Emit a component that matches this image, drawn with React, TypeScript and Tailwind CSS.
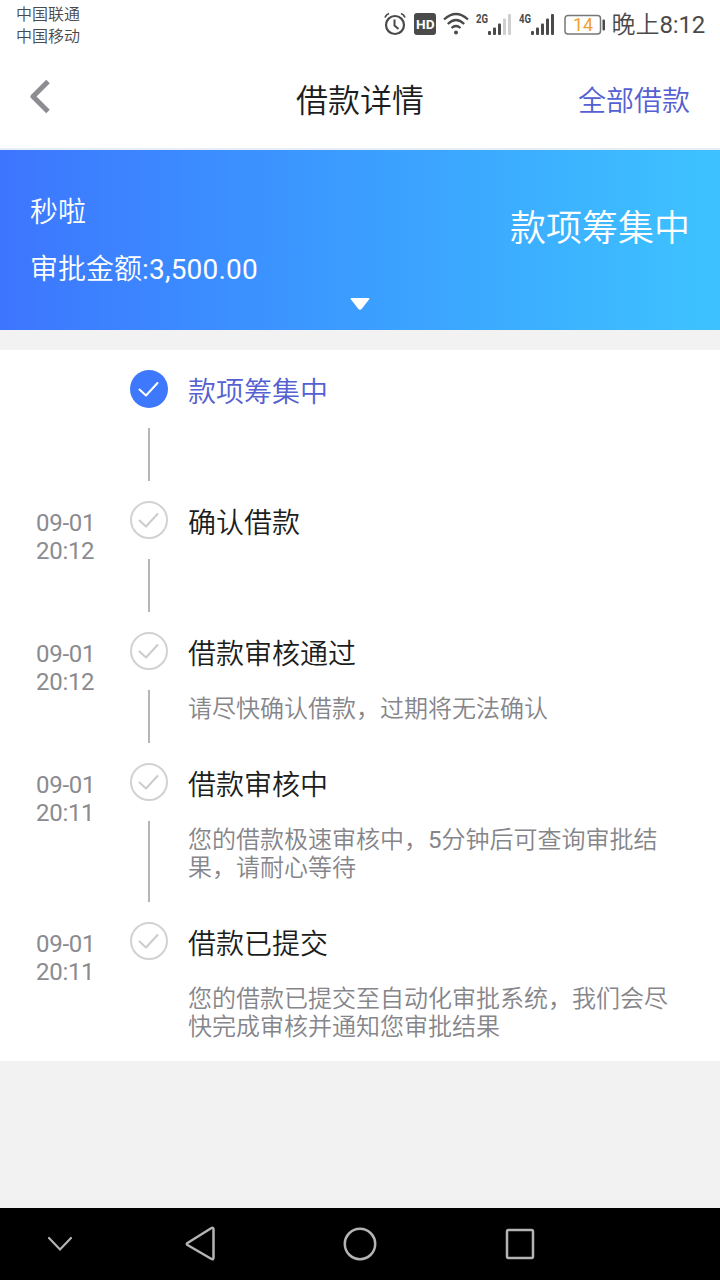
type Step = { title: string; date?: string; time?: string; note?: string[]; active?: boolean };

const steps: Step[] = [
  { title: "款项筹集中", active: true },
  { title: "确认借款", date: "09-01", time: "20:12" },
  { title: "借款审核通过", date: "09-01", time: "20:12", note: ["请尽快确认借款，过期将无法确认"] },
  {
    title: "借款审核中",
    date: "09-01",
    time: "20:11",
    note: ["您的借款极速审核中，5分钟后可查询审批结", "果，请耐心等待"],
  },
  {
    title: "借款已提交",
    date: "09-01",
    time: "20:11",
    note: ["您的借款已提交至自动化审批系统，我们会尽", "快完成审核并通知您审批结果"],
  },
];

function Signal({ label, dim }: { label: string; dim?: boolean }) {
  const faded = dim ? "#cfcfcf" : "#4a4a4a";
  return (
    <svg width="36" height="26" viewBox="0 0 36 26" className="block">
      <text x="0" y="10.500" fontSize="13" fontWeight="700" fill="#4a4a4a" textLength="12" lengthAdjust="spacingAndGlyphs" fontFamily="Roboto, sans-serif">
        {label}
      </text>
      <rect x="12" y="19" width="3" height="4" rx="1" fill="#4a4a4a" />
      <rect x="17" y="15.500" width="3" height="7.500" rx="1" fill="#4a4a4a" />
      <rect x="22" y="11.500" width="3" height="11.500" rx="1" fill="#4a4a4a" />
      <rect x="27" y="6.500" width="3" height="16.500" rx="1" fill={faded} />
      <rect x="32" y="2" width="3" height="21" rx="1" fill={faded} />
    </svg>
  );
}

function StatusBar() {
  return (
    <div className="flex h-[50px] justify-between pl-4 pr-[15px] text-[#4a4a4a]">
      <div className="pt-1 text-[16px] leading-[22px] font-[350]">
        <div>中国联通</div>
        <div>中国移动</div>
      </div>
      <div className="flex h-[26px] pt-3">
        <svg width="22" height="24" viewBox="0 0 22 24" fill="none" stroke="#4a4a4a" className="mr-2 block shrink-0">
          <circle cx="11" cy="13" r="9" strokeWidth="2.200" />
          <path d="M10.500 7.500v6l4 3.500" strokeWidth="2" />
          <path d="M1 5.500Q2 2.500 5 1.500M21 5.500Q20 2.500 17 1.500" strokeWidth="1.800" />
        </svg>
        <svg width="22" height="23" viewBox="0 0 22 23" className="mr-[7px] block shrink-0">
          <rect y="1" width="22" height="22" rx="3" fill="#4a4a4a" />
          <text x="2" y="17" fontSize="13.500" fontWeight="700" fill="#fff" textLength="18.500" lengthAdjust="spacingAndGlyphs" fontFamily="Roboto, sans-serif">
            HD
          </text>
        </svg>
        <svg width="26" height="24" viewBox="0 0 26 24" fill="none" stroke="#4a4a4a" strokeWidth="2.200" className="mr-[7px] block shrink-0">
          <path d="M1 7.500Q13-3.500 25 7.500M4.800 12Q13 4 21.200 12M8.500 16Q13 12 17.500 16" />
          <circle cx="13" cy="20.500" r="2" fill="#4a4a4a" stroke="none" />
        </svg>
        <div className="mr-[7px] shrink-0">
          <Signal label="2G" dim />
        </div>
        <div className="mr-[9px] shrink-0">
          <Signal label="4G" />
        </div>
        <svg width="42" height="24" viewBox="0 0 42 24" className="mr-[6px] block shrink-0">
          <rect x="1" y="3.500" width="35.500" height="18.500" rx="3" fill="#fff" stroke="#777" strokeWidth="1.500" />
          <rect x="38.500" y="7.500" width="2.500" height="11" rx="1" fill="#4a4a4a" />
          <text x="9" y="19" fontSize="18" fill="#f0a02c" fontFamily="Roboto, sans-serif">
            14
          </text>
        </svg>
        <div className="mt-px h-6 text-[24px] leading-6 font-[350] whitespace-nowrap">
          晚上<span className="font-normal tracking-[-0.2px]">8:12</span>
        </div>
      </div>
    </div>
  );
}

function CheckMark({ active }: { active?: boolean }) {
  return (
    <svg width="38" height="38" viewBox="0 0 38 38" fill="none" className="block shrink-0">
      <circle cx="19" cy="19" r={active ? 19 : 18} fill={active ? "#3d78fd" : "#fff"} stroke={active ? "none" : "#d2d2d2"} strokeWidth="2" />
      <path d="M9.500 19.500L16 25.500L27.500 13" stroke={active ? "#fff" : "#ccc"} strokeWidth="2" strokeLinecap="round" strokeLinejoin="round" />
    </svg>
  );
}

function TimelineRow({ step, last }: { step: Step; last: boolean }) {
  return (
    <li className={last ? "flex min-h-[139px]" : "flex min-h-[131px]"}>
      <div className="w-[130px] pt-2 pl-9 text-[24px] leading-7 tracking-[-0.3px] whitespace-nowrap text-[#8b8b8f]">
        <div>{step.date}</div>
        <div>{step.time}</div>
      </div>
      <div className="flex w-[38px] flex-col items-center">
        <CheckMark active={step.active} />
        {!last && <div className="my-5 w-0.5 flex-1 bg-[#b5b5b5]" />}
      </div>
      <div className={last ? "flex-1 pt-[3px] pb-5 pl-5" : "flex-1 pt-[3px] pb-10 pl-5"}>
        <h2 className={step.active ? "text-[28px] leading-10 font-[350] text-[#5560d2]" : "text-[28px] leading-10 font-[350] text-[#1c1d20]"}>{step.title}</h2>
        {step.note && (
          <div className="mt-5 text-[24px] leading-7 font-[350] whitespace-nowrap text-[#85858a]">
            {step.note.map((line) => (
              <p key={line}>
                {line.split(/(\d+)/).map((part, i) => (
                  <span key={i} className={i % 2 ? "font-normal" : ""}>
                    {part}
                  </span>
                ))}
              </p>
            ))}
          </div>
        )}
      </div>
    </li>
  );
}

export default function App() {
  return (
    <div className="flex h-[1280px] w-[720px] flex-col overflow-hidden bg-[#f2f2f2] font-[Roboto,'Noto_Sans_CJK_SC',sans-serif]">
      <div className="h-[150px] border-b-2 border-[#e7eef5] bg-white">
        <StatusBar />
        <header className="grid h-[98px] grid-cols-3 items-center px-[30px]">
          <svg width="20" height="34" viewBox="0 0 20 34" fill="none" stroke="#8c8c91" strokeWidth="5" strokeLinejoin="round" className="mb-1 block">
            <path d="M18 1.500L3 16.500L18 31.500" />
          </svg>
          <h1 className="pt-1 text-center text-[32px] leading-10 font-[350] text-[#1c1d20]">借款详情</h1>
          <a className="pt-[5px] text-right text-[28px] leading-10 font-[350] text-[#5560d2]">全部借款</a>
        </header>
      </div>
      <section className="h-[180px] bg-linear-to-r from-[#3d75fe] to-[#3ec3ff] px-[30px] text-white">
        <div className="flex h-[146px] justify-between">
          <div className="pt-[43px] text-[28px] leading-10 font-[350]">
            <div>秒啦</div>
            <div className="mt-[17px]">
              审批金额<span className="font-normal tracking-[0.2px]">:3,500.00</span>
            </div>
          </div>
          <div className="pt-[54px] text-[36px] leading-[50px] font-[350]">款项筹集中</div>
        </div>
        <svg width="20" height="14" viewBox="0 0 20 14" className="mx-auto block">
          <path d="M1.500 2H18.500Q20 2 19 3.500L12 12.500Q10 15 8 12.500L1 3.500Q0 2 1.500 2Z" fill="#fff" />
        </svg>
      </section>
      <ul className="mt-5 bg-white pt-5">
        {steps.map((step, i) => (
          <TimelineRow key={step.title} step={step} last={i === steps.length - 1} />
        ))}
      </ul>
      <nav className="mt-auto flex h-[72px] items-center bg-black pr-[120px]">
        <div className="flex w-[120px] justify-center">
          <svg width="26" height="16" viewBox="0 0 26 16" fill="none" stroke="#b4b4b4" strokeWidth="2.200" strokeLinecap="round">
            <path d="M2 2L13 13.500L24 2" />
          </svg>
        </div>
        <div className="flex w-40 justify-center">
          <svg width="30" height="36" viewBox="0 0 30 36" fill="none" stroke="#b4b4b4" strokeWidth="2.500" strokeLinejoin="round">
            <path d="M2.500 17L26.500 2Q28.500 1 28.500 3.500V31.500Q28.500 34 26.500 33L2.500 19Q1 18 2.500 17Z" />
          </svg>
        </div>
        <div className="flex w-40 justify-center">
          <svg width="34" height="36" viewBox="0 0 34 36" fill="none" stroke="#b4b4b4" strokeWidth="2.500">
            <circle cx="17" cy="18" r="15.200" />
          </svg>
        </div>
        <div className="flex w-40 justify-center">
          <svg width="30" height="32" viewBox="0 0 30 32" fill="none" stroke="#b4b4b4" strokeWidth="2.500">
            <rect x="2" y="2" width="26" height="28" rx="1.500" />
          </svg>
        </div>
      </nav>
    </div>
  );
}
